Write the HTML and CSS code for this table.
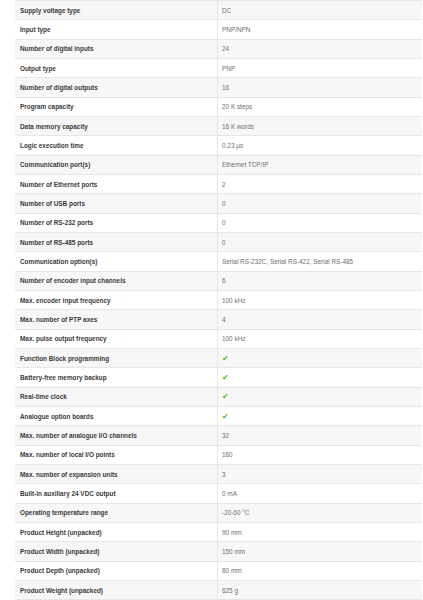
FILE: index.html
```html
<!DOCTYPE html>
<html>
<head>
<meta charset="utf-8">
<link rel="stylesheet" href="styles.css">
</head>
<body>
<div class="specs">
  <div class="row"><div class="k">Supply voltage type</div><div class="v">DC</div></div>
  <div class="row"><div class="k">Input type</div><div class="v">PNP/NPN</div></div>
  <div class="row"><div class="k">Number of digital inputs</div><div class="v">24</div></div>
  <div class="row"><div class="k">Output type</div><div class="v">PNP</div></div>
  <div class="row"><div class="k">Number of digital outputs</div><div class="v">16</div></div>
  <div class="row"><div class="k">Program capacity</div><div class="v">20 K steps</div></div>
  <div class="row"><div class="k">Data memory capacity</div><div class="v">16 K words</div></div>
  <div class="row"><div class="k">Logic execution time</div><div class="v">0.23 μs</div></div>
  <div class="row"><div class="k">Communication port(s)</div><div class="v">Ethernet TCP/IP</div></div>
  <div class="row"><div class="k">Number of Ethernet ports</div><div class="v">2</div></div>
  <div class="row"><div class="k">Number of USB ports</div><div class="v">0</div></div>
  <div class="row"><div class="k">Number of RS-232 ports</div><div class="v">0</div></div>
  <div class="row"><div class="k">Number of RS-485 ports</div><div class="v">0</div></div>
  <div class="row"><div class="k">Communication option(s)</div><div class="v">Serial RS-232C, Serial RS-422, Serial RS-485</div></div>
  <div class="row"><div class="k">Number of encoder input channels</div><div class="v">6</div></div>
  <div class="row"><div class="k">Max. encoder input frequency</div><div class="v">100 kHz</div></div>
  <div class="row"><div class="k">Max. number of PTP axes</div><div class="v">4</div></div>
  <div class="row"><div class="k">Max. pulse output frequency</div><div class="v">100 kHz</div></div>
  <div class="row"><div class="k">Function Block programming</div><div class="v"><span class="check">✔</span></div></div>
  <div class="row"><div class="k">Battery-free memory backup</div><div class="v"><span class="check">✔</span></div></div>
  <div class="row"><div class="k">Real-time clock</div><div class="v"><span class="check">✔</span></div></div>
  <div class="row"><div class="k">Analogue option boards</div><div class="v"><span class="check">✔</span></div></div>
  <div class="row"><div class="k">Max. number of analogue I/O channels</div><div class="v">32</div></div>
  <div class="row"><div class="k">Max. number of local I/O points</div><div class="v">160</div></div>
  <div class="row"><div class="k">Max. number of expansion units</div><div class="v">3</div></div>
  <div class="row"><div class="k">Built-in auxiliary 24 VDC output</div><div class="v">0 mA</div></div>
  <div class="row"><div class="k">Operating temperature range</div><div class="v">-20-60 °C</div></div>
  <div class="row"><div class="k">Product Height (unpacked)</div><div class="v">90 mm</div></div>
  <div class="row"><div class="k">Product Width (unpacked)</div><div class="v">150 mm</div></div>
  <div class="row"><div class="k">Product Depth (unpacked)</div><div class="v">80 mm</div></div>
  <div class="row"><div class="k">Product Weight (unpacked)</div><div class="v">625 g</div></div>
</div>
</body>
</html>
```
FILE: styles.css
```css
html, body {
  margin: 0;
  padding: 0;
  background: #ffffff;
}
.specs {
  margin-left: 15px;
  width: 407px;
  display: grid;
  grid-auto-rows: 19.33px;
  border-top: 1px solid #e6e6e6;
  font-family: "Liberation Sans", Arial, sans-serif;
  font-size: 6.4px;
}
.row {
  display: grid;
  grid-template-columns: 202px 1fr;
  border-bottom: 1px solid #e6e6e6;
  box-sizing: border-box;
}
.row:nth-child(odd) {
  background: #f7f7f7;
}
.k {
  display: flex;
  align-items: center;
  padding-left: 5px;
  color: #3a3a3a;
  font-weight: bold;
}
.v {
  display: flex;
  align-items: center;
  padding-left: 4px;
  border-left: 1px solid #e6e6e6;
  color: #6f6f6f;
}
.check {
  color: #5cb82a;
  font-size: 8px;
}
```
